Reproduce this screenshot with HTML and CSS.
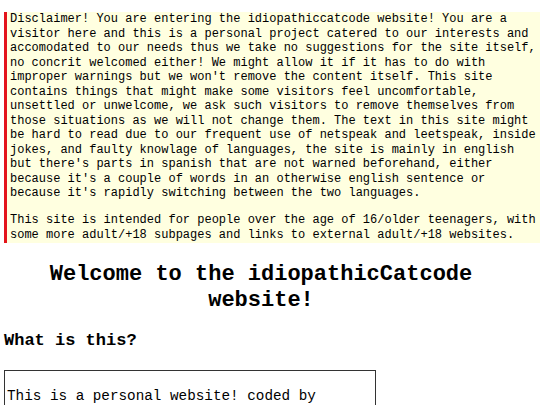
FILE: index.html
```html
<!DOCTYPE html>
<html>
<head>
<meta charset="utf-8">
<link rel="stylesheet" href="styles.css">
</head>
<body>
<div class="page">
  <div class="disclaimer">
    <p>Disclaimer! You are entering the idiopathiccatcode website! You are a visitor here and this is a personal project catered to our interests and accomodated to our needs thus we take no suggestions for the site itself, no concrit welcomed either! We might allow it if it has to do with improper warnings but we won't remove the content itself. This site contains things that might make some visitors feel uncomfortable, unsettled or unwelcome, we ask such visitors to remove themselves from those situations as we will not change them. The text in this site might be hard to read due to our frequent use of netspeak and leetspeak, inside jokes, and faulty knowlage of languages, the site is mainly in english but there's parts in spanish that are not warned beforehand, either because it's a couple of words in an otherwise english sentence or because it's rapidly switching between the two languages.</p>
    <p class="second">This site is intended for people over the age of 16/older teenagers, with some more adult/+18 subpages and links to external adult/+18 websites.</p>
  </div>
  <h1 class="title">Welcome to the idiopathicCatcode website!</h1>
  <h2 class="subtitle">What is this?</h2>
  <div class="about">
    <p>This is a personal website! coded by idiopathicCatcode, a place for us to put our interests, art and writing.</p>
  </div>
</div>
</body>
</html>
```

FILE: styles.css
```css
html, body {
  margin: 0;
  padding: 0;
  background: #ffffff;
}

body {
  font-family: "Liberation Mono", "DejaVu Sans Mono", monospace;
  color: #000000;
  overflow: hidden;
}

.page {
  padding: 12px 0 0 4px;
}

.disclaimer {
  background: #ffffe0;
  border-left: 3px solid #e3141b;
  padding: 0 2px 1px 3px;
  font-size: 12px;
  line-height: 14.5px;
}

.disclaimer p {
  margin: 0;
}

.disclaimer .second {
  margin-top: 12.5px;
}

.title {
  width: 514px;
  margin: 19px 0 0 0;
  font-size: 22px;
  line-height: 26px;
  text-align: center;
  font-weight: bold;
}

.subtitle {
  margin: 17px 0 0 0;
  font-size: 17px;
  line-height: 20px;
  font-weight: bold;
}

.about {
  width: 367px;
  margin-top: 19px;
  border: 1px solid #333333;
  padding: 17px 1px 4px 2px;
  font-size: 14.3px;
  line-height: 17px;
}

.about p {
  margin: 0;
}
```
